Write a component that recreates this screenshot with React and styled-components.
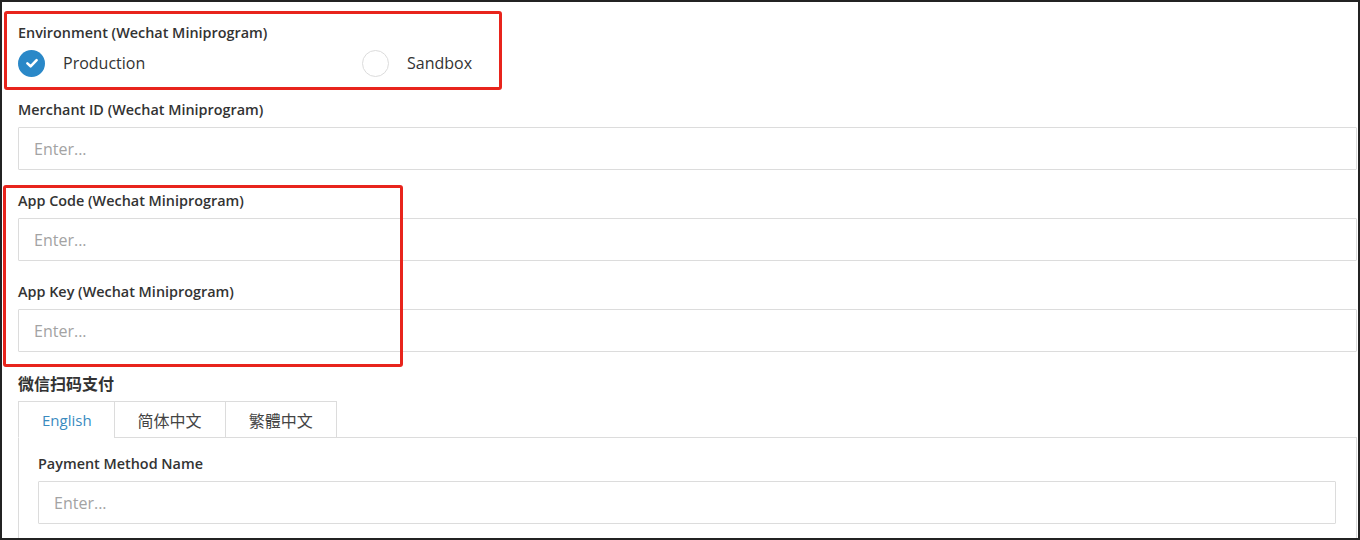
import React, { useState } from "react";
import styled, { createGlobalStyle } from "styled-components";

const GlobalStyle = createGlobalStyle`
  html, body {
    margin: 0;
    padding: 0;
    background: #ffffff;
  }
  * {
    box-sizing: border-box;
  }
`;

const fields = [
  { id: "merchant", label: "Merchant ID (Wechat Miniprogram)" },
  { id: "code", label: "App Code (Wechat Miniprogram)" },
  { id: "key", label: "App Key (Wechat Miniprogram)" },
];

const tabs = ["English", "简体中文", "繁體中文"];

const CheckMark = () => (
  <svg width="16" height="16" viewBox="0 0 16 16">
    <path
      d="M3.4 8.4 L6.6 11.3 L12.6 5.2"
      fill="none"
      stroke="#ffffff"
      strokeWidth="2.6"
      strokeLinecap="round"
      strokeLinejoin="round"
    />
  </svg>
);

export default function App() {
  const [env, setEnv] = useState("production");
  const [tab, setTab] = useState(0);

  return (
    <Frame>
      <GlobalStyle />
      <Content>
        <Field>
          <Label>Environment (Wechat Miniprogram)</Label>
          <RadioGroup>
            <RadioOption onClick={() => setEnv("production")}>
              <RadioDot $checked={env === "production"}>
                {env === "production" && <CheckMark />}
              </RadioDot>
              <RadioText>Production</RadioText>
            </RadioOption>
            <RadioOption onClick={() => setEnv("sandbox")}>
              <RadioDot $checked={env === "sandbox"}>
                {env === "sandbox" && <CheckMark />}
              </RadioDot>
              <RadioText>Sandbox</RadioText>
            </RadioOption>
          </RadioGroup>
        </Field>

        {fields.map((f) => (
          <Field key={f.id}>
            <Label>{f.label}</Label>
            <Input placeholder="Enter..." />
          </Field>
        ))}

        <SectionTitle>微信扫码支付</SectionTitle>
        <TabBar>
          {tabs.map((t, idx) => (
            <Tab key={t} $active={tab === idx} onClick={() => setTab(idx)}>
              {t}
            </Tab>
          ))}
        </TabBar>
        <TabPanel>
          <Label>Payment Method Name</Label>
          <Input placeholder="Enter..." />
        </TabPanel>
      </Content>

      <Highlight $top={11} $left={4} $width={498} $height={79} />
      <Highlight $top={185} $left={3} $width={400} $height={182} />
    </Frame>
  );
}

const Frame = styled.div`
  position: relative;
  width: 1360px;
  height: 540px;
  overflow: hidden;
  border: 2px solid #232323;
  background: #ffffff;
  font-family: "Open Sans", "Noto Sans CJK SC", sans-serif;
  color: #333333;
`;

const Content = styled.div`
  display: flex;
  flex-direction: column;
  padding: 21px 1px 0 16px;
`;

const Field = styled.div`
  display: flex;
  flex-direction: column;
  margin-bottom: 21px;

  &:first-child {
    margin-bottom: 23px;
  }
`;

const Label = styled.div`
  font-size: 14.4px;
  font-weight: 600;
  line-height: 20px;
  color: #333333;
  margin-bottom: 7px;
`;

const RadioGroup = styled.div`
  display: grid;
  grid-template-columns: 344px 344px;
  margin-top: -1px;
`;

const RadioOption = styled.label`
  display: flex;
  align-items: center;
  gap: 18px;
  height: 28px;
  cursor: pointer;
`;

const RadioDot = styled.span`
  width: 27px;
  height: 27px;
  border-radius: 50%;
  display: flex;
  align-items: center;
  justify-content: center;
  background: ${(p) => (p.$checked ? "#2a88c8" : "#ffffff")};
  border: ${(p) => (p.$checked ? "none" : "1.5px solid #dcdcdc")};
`;

const RadioText = styled.span`
  font-size: 16px;
  color: #333333;
  margin-top: -1px;
`;

const Input = styled.input`
  width: 100%;
  height: 43px;
  border: 1px solid #dcdcdc;
  border-radius: 1px;
  padding: 0 15px;
  font-family: "Open Sans", sans-serif;
  font-size: 16px;
  color: #333333;
  outline: none;

  &::placeholder {
    color: #a3a3a3;
  }
`;

const SectionTitle = styled.div`
  font-size: 16px;
  font-weight: 700;
  line-height: 20px;
  color: #333333;
  margin-top: 1px;
  margin-bottom: 7px;
`;

const TabBar = styled.div`
  display: flex;
`;

const Tab = styled.div`
  height: 37px;
  padding: 0 23px;
  display: flex;
  align-items: center;
  font-size: ${(p) => (p.$active ? "15px" : "16px")};
  color: ${(p) => (p.$active ? "#3a8bbf" : "#444444")};
  border: 1px solid #dcdcdc;
  border-bottom: ${(p) => (p.$active ? "1px solid #ffffff" : "1px solid #dcdcdc")};
  margin-left: -1px;
  margin-bottom: -1px;
  background: #ffffff;
  position: relative;
  z-index: 1;
  cursor: pointer;

  &:first-child {
    margin-left: 0;
    padding-right: 22px;
  }
`;

const TabPanel = styled.div`
  border: 1px solid #dcdcdc;
  padding: 16px 20px 20px 19px;
`;

const Highlight = styled.div`
  position: absolute;
  top: ${(p) => p.$top - 2}px;
  left: ${(p) => p.$left - 2}px;
  width: ${(p) => p.$width}px;
  height: ${(p) => p.$height}px;
  border: 3px solid #e8241c;
  border-radius: 3px;
  pointer-events: none;
`;
